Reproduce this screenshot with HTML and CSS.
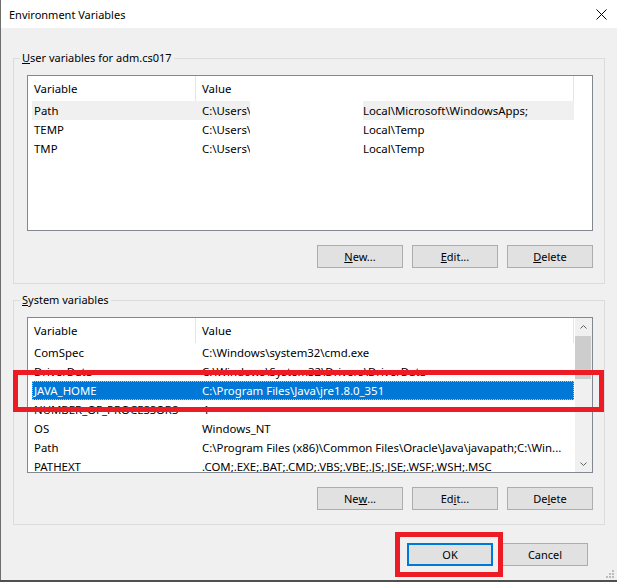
FILE: index.html
```html
<!DOCTYPE html>
<html lang="en">
  <head>
    <meta charset="UTF-8" />
    <meta name="viewport" content="width=device-width, initial-scale=1.0" />
    <title>Environment Variables</title>
    <link rel="stylesheet" href="styles.css">
  </head>

  <body>
    <div class="dialog">
      <div class="titlebar">
        <div class="title">Environment Variables</div>
        <svg class="close" width="11" height="11" viewBox="0 0 11 11">
          <path d="M0.5 0.5 L10.5 10.5 M10.5 0.5 L0.5 10.5" stroke="#000" stroke-width="1" fill="none" />
        </svg>
      </div>

      <div class="content">
        <fieldset class="group group-user">
          <legend><u>U</u>ser variables for adm.cs017</legend>
          <div class="list">
            <div class="list-main">
              <div class="list-head">
                <div class="head-var">Variable</div>
                <div class="head-val">Value</div>
              </div>
              <div class="row current">
                <div class="var">Path</div>
                <div class="val"><span class="cut">C:\Users\</span><span class="blank"></span>Local\Microsoft\WindowsApps;</div>
              </div>
              <div class="row">
                <div class="var">TEMP</div>
                <div class="val"><span class="cut">C:\Users\</span><span class="blank"></span>Local\Temp</div>
              </div>
              <div class="row">
                <div class="var">TMP</div>
                <div class="val"><span class="cut">C:\Users\</span><span class="blank"></span>Local\Temp</div>
              </div>
            </div>
            <div class="scroll-space"></div>
          </div>
          <div class="buttons">
            <div class="btn"><u>N</u>ew...</div>
            <div class="btn"><u>E</u>dit...</div>
            <div class="btn"><u>D</u>elete</div>
          </div>
        </fieldset>

        <fieldset class="group group-system">
          <legend><u>S</u>ystem variables</legend>
          <div class="list">
            <div class="list-main">
              <div class="list-head">
                <div class="head-var">Variable</div>
                <div class="head-val">Value</div>
              </div>
              <div class="row">
                <div class="var">ComSpec</div>
                <div class="val">C:\Windows\system32\cmd.exe</div>
              </div>
              <div class="row">
                <div class="var">DriverData</div>
                <div class="val">C:\Windows\System32\Drivers\DriverData</div>
              </div>
              <div class="row selected">
                <div class="var">JAVA_HOME</div>
                <div class="val">C:\Program Files\Java\jre1.8.0_351</div>
              </div>
              <div class="row">
                <div class="var">NUMBER_OF_PROCESSORS</div>
                <div class="val">4</div>
              </div>
              <div class="row">
                <div class="var">OS</div>
                <div class="val">Windows_NT</div>
              </div>
              <div class="row">
                <div class="var">Path</div>
                <div class="val">C:\Program Files (x86)\Common Files\Oracle\Java\javapath;C:\Win...</div>
              </div>
              <div class="row">
                <div class="var">PATHEXT</div>
                <div class="val">.COM;.EXE;.BAT;.CMD;.VBS;.VBE;.JS;.JSE;.WSF;.WSH;.MSC</div>
              </div>
            </div>
            <div class="scrollbar">
              <div class="arrow arrow-up">
                <svg width="7" height="4" viewBox="0 0 7 4"><path d="M0.5 3.5 L3.5 0.5 L6.5 3.5" stroke="#606060" fill="none" /></svg>
              </div>
              <div class="thumb"></div>
              <div class="track"></div>
              <div class="arrow arrow-down">
                <svg width="7" height="4" viewBox="0 0 7 4"><path d="M0.5 0.5 L3.5 3.5 L6.5 0.5" stroke="#606060" fill="none" /></svg>
              </div>
            </div>
          </div>
          <div class="buttons">
            <div class="btn">Ne<u>w</u>...</div>
            <div class="btn">Ed<u>i</u>t...</div>
            <div class="btn">De<u>l</u>ete</div>
          </div>
        </fieldset>

        <div class="footer">
          <div class="btn default">OK</div>
          <div class="btn">Cancel</div>
        </div>
      </div>

      <!-- paint marks drawn over the dialog -->
      <div class="mark mark-java"></div>
      <div class="mark mark-ok"></div>

      <svg class="grip" width="10" height="10" viewBox="0 0 10 10">
        <rect x="7" y="1" width="2" height="2" fill="#bcbcbc" />
        <rect x="4" y="4" width="2" height="2" fill="#bcbcbc" />
        <rect x="7" y="4" width="2" height="2" fill="#bcbcbc" />
        <rect x="1" y="7" width="2" height="2" fill="#bcbcbc" />
        <rect x="4" y="7" width="2" height="2" fill="#bcbcbc" />
        <rect x="7" y="7" width="2" height="2" fill="#bcbcbc" />
      </svg>
    </div>
  </body>
</html>
```

FILE: styles.css
```css
body {
  margin: 0;
  background-color: #4f4f4f;
  font-family: "Noto Sans", "Open Sans", sans-serif;
  font-size: 11px;
  line-height: 15px;
  color: #000;
}
.dialog {
  position: relative;
  width: 616px;
  height: 580px;
  background-color: #f0f0f0;
  border-left: 1px solid #6e6e6e;
  overflow: hidden;
}
.titlebar {
  display: flex;
  align-items: center;
  height: 28px;
  background-color: #fff;
  padding-left: 8px;
}
.title {
  flex-grow: 1;
}
.close {
  margin-right: 10px;
}

.content {
  padding: 22px 12px 0 12px;
}
.group {
  margin: 0;
  border: 1px solid #dcdcdc;
  padding: 0 11px 15px 6px;
}
.group-system {
  margin-top: 8px;
  padding-bottom: 14px;
}
.group legend {
  padding: 0 2px;
  line-height: 16px;
}

.list {
  display: flex;
  height: 156px;
  box-sizing: border-box;
  margin: 9px 0 0 7px;
  border: 1px solid #828790;
  background-color: #fff;
  overflow: hidden;
  font-size: 11.4px;
}
.list-main {
  width: 547px;
  overflow: hidden;
}
.scroll-space,
.scrollbar {
  width: 17px;
}
.list-head {
  display: flex;
  height: 25px;
}
.head-var,
.head-val {
  display: flex;
  align-items: center;
  box-sizing: border-box;
  border-right: 1px solid #e5e5e5;
  padding-left: 6px;
}
.head-var {
  width: 168px;
}
.head-val {
  width: 378px;
}

.row {
  display: flex;
  align-items: center;
  width: 542px;
  height: 19px;
  margin-left: 4px;
  white-space: nowrap;
}
.row .var {
  width: 164px;
  box-sizing: border-box;
  padding-left: 2px;
  overflow: hidden;
}
.row .val {
  display: flex;
  align-items: center;
  height: 19px;
  flex: 1;
  padding-left: 6px;
  overflow: hidden;
}
.row.current {
  background-color: #f0f0f0;
}
.row.selected {
  background-color: #0078d7;
  color: #fff;
  outline: 1px dotted #9cc8ee;
  outline-offset: -1px;
}
.cut {
  display: inline-block;
  width: 48px;
  overflow: hidden;
}
.blank {
  display: inline-block;
  width: 113px;
  height: 19px;
  background-color: #fff;
}

.scrollbar {
  display: flex;
  flex-direction: column;
  background-color: #f0f0f0;
}
.arrow {
  display: flex;
  align-items: center;
  justify-content: center;
  height: 17px;
}
.arrow-up {
  height: 18px;
}
.thumb {
  height: 43px;
  margin: 0 1px 0 0;
  background-color: #cdcdcd;
}
.track {
  flex-grow: 1;
}

.buttons,
.footer {
  display: flex;
  justify-content: flex-end;
  gap: 9px;
}
.buttons {
  margin-top: 14px;
}
.footer {
  margin-top: 18px;
  padding-right: 17px;
}
.btn {
  width: 86px;
  height: 23px;
  box-sizing: border-box;
  display: flex;
  align-items: center;
  justify-content: center;
  background-color: #e1e1e1;
  border: 1px solid #adadad;
}
.btn.default {
  border: 2px solid #0078d7;
}

.mark {
  position: absolute;
  box-sizing: border-box;
  border: 5px solid #ed1c24;
}
.mark-java {
  left: 12px;
  top: 370px;
  width: 591px;
  height: 42px;
}
.mark-ok {
  left: 394px;
  top: 532px;
  width: 108px;
  height: 45px;
}
.grip {
  position: absolute;
  right: 2px;
  bottom: 1px;
}
```
